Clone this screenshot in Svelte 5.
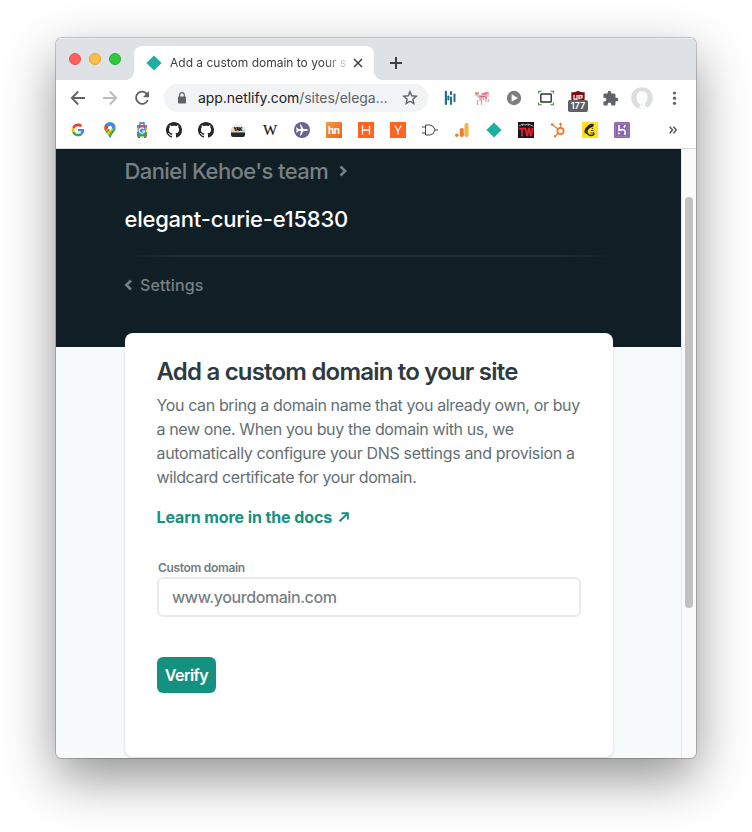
<script>
  const githubPath =
    'M8 0C3.58 0 0 3.58 0 8c0 3.54 2.29 6.53 5.47 7.59.4.07.55-.17.55-.38 0-.19-.01-.82-.01-1.49-2.01.37-2.53-.49-2.69-.94-.09-.23-.48-.94-.82-1.13-.28-.15-.68-.52-.01-.53.63-.01 1.08.58 1.23.82.72 1.21 1.87.87 2.33.66.07-.52.28-.87.51-1.07-1.78-.2-3.64-.89-3.64-3.95 0-.87.31-1.59.82-2.15-.08-.2-.36-1.02.08-2.12 0 0 .67-.21 2.2.82.64-.18 1.32-.27 2-.27s1.36.09 2 .27c1.53-1.04 2.2-.82 2.2-.82.44 1.1.16 1.92.08 2.12.51.56.82 1.27.82 2.15 0 3.07-1.87 3.75-3.65 3.95.29.25.54.73.54 1.48 0 1.07-.01 1.93-.01 2.2 0 .21.15.46.55.38A8.01 8.01 0 0 0 16 8c0-4.42-3.58-8-8-8z';
  let domain = $state('');
</script>

{#snippet diamond()}
  <svg width="16" height="16" viewBox="0 0 16 16"><path d="M8 .4 15.6 8 8 15.6.4 8z" fill="#1fafa0" /></svg>
{/snippet}

{#snippet github()}
  <svg width="16" height="16" viewBox="0 0 16 16"><path d={githubPath} fill="#24292e" /></svg>
{/snippet}

<div class="desktop">
  <div class="window">
    <header class="tabs">
      <div class="lights"><i class="red"></i><i class="amber"></i><i class="green"></i></div>
      <div class="tab">
        {@render diamond()}
        <span class="tab-title">Add a custom domain to your s</span>
        <svg class="close" width="10" height="10" viewBox="0 0 10 10"><path d="M1 1l8 8M9 1 1 9" stroke="#3c4043" stroke-width="1.5" /></svg>
      </div>
      <svg class="plus" width="14" height="14" viewBox="0 0 14 14"><path d="M7 1v12M1 7h12" stroke="#3c4043" stroke-width="2" /></svg>
    </header>

    <div class="toolbar">
      <div class="cell"><svg width="16" height="16" viewBox="0 0 16 16" fill="none" stroke="#5f6368" stroke-width="1.8"><path d="M15 8H2M8.2 1.5 1.8 8l6.4 6.5" /></svg></div>
      <div class="cell"><svg width="16" height="16" viewBox="0 0 16 16" fill="none" stroke="#b9bbbe" stroke-width="1.8"><path d="M1 8h13M7.8 1.5 14.2 8l-6.4 6.5" /></svg></div>
      <div class="cell"><svg width="16" height="16" viewBox="0 0 16 16"><path d="M13.2 4.3A6.1 6.1 0 1 0 13.8 10" fill="none" stroke="#5f6368" stroke-width="1.9" /><path d="M15 1v6.2H8.8z" fill="#5f6368" /></svg></div>
      <div class="address">
        <svg class="lock" width="10" height="12" viewBox="0 0 10 12"><rect x="1" y="4.4" width="8" height="7.2" rx=".8" fill="#5f6368" /><path d="M2.7 5V3a2.3 2.3 0 0 1 4.6 0v2" fill="none" stroke="#5f6368" stroke-width="1.2" /></svg>
        <span class="url">app.netlify.com<span>/sites/elega...</span></span>
        <svg class="star" width="16" height="16" viewBox="0 0 16 16"><path d="m8 1.7 1.75 4.1 4.5.4-3.4 2.95 1 4.35L8 11.2l-3.85 2.3 1-4.35-3.4-2.95 4.5-.4z" fill="none" stroke="#5f6368" stroke-width="1.4" /></svg>
      </div>
      <div class="cell"><svg width="16" height="16" viewBox="0 0 16 16" fill="#24708a"><rect x="2.800" y=".8" width="2.200" height="14.200" rx=".9" /><rect x="5.400" y="5.400" width="2" height="5.200" rx=".8" /><rect x="8" y="1" width="2" height="4.200" rx=".9" /><rect x="8" y="6.600" width="2" height="8.400" rx=".9" /><rect x="11.500" y="3.400" width="2" height="8.800" rx=".9" /></svg></div>
      <div class="cell"><svg width="16" height="16" viewBox="0 0 16 16" fill="none"><path d="M1 3.200h4M5 6.500h8M7.500 4.200 14.500 2.500" stroke="#e08894" stroke-width="2" /><path d="M4 3v5M3.500 10v5M6 5v6M7.500 7v8M9.500 5v5M12 3v9M14 2v5M14.300 9v3" stroke="#e59aa3" stroke-width="1.200" /><path d="M1.500 5h2M6.500 6.500h4M10 4h3M11 8h2" stroke="#d9627a" stroke-width="1" /></svg></div>
      <div class="cell"><svg width="16" height="16" viewBox="0 0 16 16"><circle cx="8" cy="8" r="7.2" fill="#7d7d7d" /><path d="M5.6 4.3v7.4L12 8z" fill="#fff" /></svg></div>
      <div class="cell"><svg width="16" height="16" viewBox="0 0 16 16" fill="none"><rect x="2.8" y="4" width="10.4" height="8" rx=".6" stroke="#302d38" stroke-width="1.4" /><path d="M.6 3.600V1.2h3M12.4 1.2h3v2.400M.6 12.400v2.4h3M12.4 14.8h3v-2.400" stroke="#3b8d25" stroke-width="1.1" /></svg></div>
      <div class="cell shield">
        <svg width="16" height="16" viewBox="0 0 16 16"><path d="M8 .7c2 1.3 4 1.6 6.7 1.6V8c0 4-4 6-6.7 7-3-1-6.7-3-6.7-7V2.3C4 2.3 6 2 8 .7z" fill="#800b12" /><path d="M4 5v4.2h3V5M9 9.500V5.600h3v2.400H9" fill="none" stroke="#fff" stroke-width="1.2" /></svg>
        <b>177</b>
      </div>
      <div class="cell"><svg width="17" height="17" viewBox="0 0 24 24"><path d="M20.5 11H19V7c0-1.1-.9-2-2-2h-4V3.5a2.5 2.5 0 0 0-5 0V5H4a2 2 0 0 0-2 2v3.8h1.5a2.7 2.7 0 0 1 0 5.4H2V20c0 1.100.9 2 2 2h3.800v-1.500a2.700 2.700 0 0 1 5.400 0V22H17a2 2 0 0 0 2-2v-4h1.500a2.500 2.500 0 0 0 0-5z" fill="#5f6368" /></svg></div>
      <div class="cell"><svg width="22" height="22" viewBox="0 0 22 22"><circle cx="11" cy="11" r="10.8" fill="#dcdddd" /><path d="M8.200 21.500 9 17.500C6.400 15.500 5.300 12.500 5.500 9.500 5.700 6 8 4.200 11 4.200c3.500 0 5.500 2.200 5.500 5.600 0 3-.8 5.400-2.500 7.200.2 2 1 2.800 2.500 3.300-2.300 1.400-5.300 1.900-8.300 1.200z" fill="#fafbfb" /><path d="M10.300 16.500l.2 3" stroke="#dcdddd" stroke-width=".6" /></svg></div>
      <div class="cell"><svg width="16" height="16" viewBox="0 0 16 16" fill="#5f6368"><circle cx="8.500" cy="3" r="1.600" /><circle cx="8.500" cy="8.200" r="1.600" /><circle cx="8.500" cy="13.300" r="1.600" /></svg></div>
    </div>

    <nav class="bookmarks">
      <svg width="16" height="16" viewBox="-6 -6 60 60"><path fill="#EA4335" d="M24 9.500c3.540 0 6.710 1.220 9.210 3.600l6.850-6.850C35.900 2.380 30.470 0 24 0 14.620 0 6.510 5.380 2.560 13.220l7.980 6.190C12.430 13.720 17.740 9.500 24 9.500z" /><path fill="#4285F4" d="M46.980 24.550c0-1.570-.15-3.090-.38-4.550H24v9.020h12.940c-.58 2.960-2.260 5.480-4.780 7.180l7.730 6c4.510-4.180 7.090-10.360 7.090-17.650z" /><path fill="#FBBC05" d="M10.530 28.590c-.48-1.450-.76-2.990-.76-4.590s.27-3.140.76-4.590l-7.980-6.190C.92 16.460 0 20.120 0 24c0 3.880.92 7.540 2.560 10.780l7.970-6.190z" /><path fill="#34A853" d="M24 48c6.480 0 11.930-2.130 15.890-5.810l-7.730-6c-2.150 1.450-4.920 2.300-8.160 2.300-6.260 0-11.570-4.220-13.470-9.910l-7.980 6.190C6.510 42.620 14.620 48 24 48z" /></svg>
      <svg width="16" height="16" viewBox="0 0 16 16"><defs><clipPath id="pin"><path d="M8 .2a5.600 5.600 0 0 0-5.600 5.600c0 3 1.700 4.300 3.200 6.200C6.900 13.700 7.200 15.800 8 15.800s1.100-2.100 2.400-3.800c1.500-1.900 3.200-3.200 3.200-6.200A5.600 5.600 0 0 0 8 .2z" /></clipPath></defs><g clip-path="url(#pin)"><path d="M0 0h16v16H0z" fill="#34a853" /><path d="M2 12 12 0H0v12z" fill="#fbbc04" /><path d="m4 12 9-10 0 3-7 9z" fill="#fbbc04" /><path d="M0 0h6L4 2.500 7 5 3 9 0 5z" fill="#ea4335" /><path d="M4.500 2 8 0h4l2 4-3.500 3z" fill="#4285f4" /><path d="M4 2.500 7 5.500 11.500 1 9 0H5z" fill="#4285f4" /></g><circle cx="8" cy="5.800" r="2" fill="#fff" /></svg>
      <svg width="16" height="16" viewBox="0 0 16 16"><path d="M6 3V1h4v2" fill="none" stroke="#2c71d3" stroke-width="1.300" /><path d="M3 3h10v4H3z" fill="#ea4335" /><path d="M3 10h10v4.500H3z" fill="#34a853" /><path d="M4 5.500h8v6H4z" fill="#4285f4" /><path d="M3 3h2v2.500H3zM11 3h2v2.500h-2z" fill="#4285f4" /><path d="M3 5.500h1.500v3H3zM11.500 5.500H13v3h-1.500z" fill="#fbbc04" /><path d="M3 12.500h1.500v2H3zM11.500 12.500H13v2h-1.500z" fill="#ea4335" /><path d="M4 14.500h2V16H4zM10 14.500h2V16h-2z" fill="#34714e" /><path d="M10 6.700A2.700 2.700 0 1 0 10.700 9H8" fill="none" stroke="#fff" stroke-width="1.200" /></svg>
      {@render github()}
      {@render github()}
      <svg width="16" height="16" viewBox="0 0 16 16"><defs><linearGradient id="cap" x2="0" y2="1"><stop stop-color="#f4f4f4" /><stop offset="1" stop-color="#c8c8c8" /></linearGradient></defs><path d="M3.500 2.500q4.500-1.500 9 0L15 7v5H1V7z" fill="url(#cap)" /><path d="M1 10.500h14V13Q15 15 13 15H3q-2 0-2-2z" fill="#28282a" /><text x="8" y="8.600" text-anchor="middle" font-size="4.500" font-weight="900" textLength="9">YAK</text></svg>
      <svg width="16" height="16" viewBox="0 0 16 16"><text x="8" y="12.800" text-anchor="middle" font-family="Liberation Serif,serif" font-size="15" fill="#111" stroke="#111" stroke-width=".15">W</text></svg>
      <svg width="16" height="16" viewBox="0 0 16 16"><circle cx="8" cy="8" r="8" fill="#666398" /><path d="M14 8q0-1-2-1H9.500L7 2.500H5.800L7 7H4.500L3 5.500H2L2.700 8 2 10.500h1L4.500 9H7l-1.200 4.500H7L9.500 9H12q2 0 2-1z" fill="#fff" /></svg>
      <svg width="16" height="16" viewBox="0 0 16 16"><defs><linearGradient id="hn" x2="1" y2="1"><stop stop-color="#f49a46" /><stop offset="1" stop-color="#e66512" /></linearGradient></defs><path d="M0 0h16v16H0z" fill="url(#hn)" /><text x="8" y="12.200" text-anchor="middle" font-size="10" font-weight="700" fill="#fff" textLength="12">hn</text></svg>
      <svg width="16" height="16" viewBox="0 0 16 16"><path d="M0 0h16v16H0z" fill="#ff6422" /><path d="M4.500 3.500v9M11.500 3.500v9M4.500 8h7" stroke="#fff" stroke-width="1.300" /></svg>
      <svg width="16" height="16" viewBox="0 0 16 16"><path d="M0 0h16v16H0z" fill="#ff6422" /><path d="M4.800 3.500 8 9l3.200-5.500M8 8.500v4.300" fill="none" stroke="#fff" stroke-width="1.200" /></svg>
      <svg width="16" height="16" viewBox="0 0 16 16"><path d="M3.500 3H8q4 .5 5 5-1 4.500-5 5H3.500zM0 5h3.500M0 11h3.500M13 8h3" fill="none" stroke="#444" stroke-width="1" /></svg>
      <svg width="16" height="16" viewBox="0 0 16 16"><rect x="10.500" y="1" width="4" height="14" rx="1.800" fill="#fbb040" /><rect x="5.800" y="6" width="4" height="9" rx="1.800" fill="#e8812c" /><circle cx="2.800" cy="13.200" r="1.800" fill="#e8812c" /></svg>
      {@render diamond()}
      <svg class="tw" width="16" height="16" viewBox="0 0 16 16"><path d="M0 0h16v16H0z" fill="#17191b" /><path d="m1 4 4-2 2 1 3-1 5 2M4 2l1 2M11 2l-1 2" stroke="#ccc" stroke-width=".8" fill="none" /><text x="8" y="14.300" text-anchor="middle" font-family="Liberation Sans,sans-serif" font-size="11" font-weight="700" fill="#ef2029" stroke="#ef2029" stroke-width=".4" textLength="14" lengthAdjust="spacingAndGlyphs">TW</text></svg>
      <svg width="16" height="16" viewBox="0 0 16 16" fill="none" stroke="#f1782a"><circle cx="10.500" cy="9" r="3.100" stroke-width="1.800" /><path d="M8 7 2.500 2.800M10.500 5.500V2.500M8.200 11.300 5.300 14" stroke-width="1.200" /><g fill="#f1782a" stroke="none"><circle cx="2.200" cy="2.600" r="1.400" /><circle cx="10.500" cy="2" r="1.300" /><circle cx="5" cy="14.200" r="1.200" /></g></svg>
      <svg width="16" height="16" viewBox="0 0 16 16"><path d="M0 0h16v16H0z" fill="#ffdf21" /><path d="M11.500 3.200C9.500 1.200 3.800 5 3 9.500c.2 1.300 1.200 1.800 2.200 1.500 1.300 3.200 5.300 3.400 7.300.3M5 10.500c-.7-4 2.500-6 6.500-7" fill="none" stroke="#252117" stroke-width="1.500" /><path d="M5.500 6.500 8 4.500l3-.8-.6 1.500-2.400.3-1.500 2z" fill="#252117" /><path d="M9 8.500h2.500M8.500 10.800q1.800.6 3.500-.4M9.800 6.500h1.400" fill="none" stroke="#252117" stroke-width=".8" /></svg>
      <svg width="16" height="16" viewBox="0 0 16 16"><rect width="16" height="16" rx="1.500" fill="#8b66ad" /><rect x="1.500" y="1.500" width="13" height="13" rx="1" fill="none" stroke="#a98bc2" stroke-width=".6" /><path d="M5 3v5.200Q11 6.600 11 9.300V13M11 3q0 1.500-1.200 2.600" fill="none" stroke="#fff" stroke-width="1.600" /><path d="m4.300 9.800 2 1.600-2 1.700z" fill="#fff" /></svg>
      <svg class="more" width="8" height="8" viewBox="0 0 8 8" fill="none" stroke="#505357" stroke-width="1.400"><path d="m.7.8 2.800 3.200L.7 7.200M4.500.8l2.800 3.200-2.800 3.200" /></svg>
    </nav>

    <main class="page">
      <div class="content">
        <section class="hero">
          <div class="team"><span>Daniel Kehoe's team</span><svg width="9" height="12" viewBox="0 0 9 12"><path d="m1.500 1.500 4.700 4.500-4.700 4.500" /></svg></div>
          <h1><span>elegant-curie-e15830</span></h1>
          <hr />
          <div class="back"><svg width="9" height="12" viewBox="0 0 9 12"><path d="M7 1.500 2.300 6 7 10.500" /></svg><span>Settings</span></div>
        </section>
        <section class="card">
          <h2><span>Add a custom domain to your site</span></h2>
          <p>You can bring a domain name that you already own, or buy<br />a new one. When you buy the domain with us, we<br /><span>automatically configure your DNS settings and provision a</span><br />wildcard certificate for your domain.</p>
          <div class="docs"><span>Learn more in the docs</span><svg width="12" height="12" viewBox="0 0 12 12"><path d="M1.500 10.300 9.500 2.800M3.500 2.200h6.400v6.200" fill="none" stroke="#15917f" stroke-width="1.900" /></svg></div>
          <label for="domain"><span>Custom domain</span></label>
          <input id="domain" placeholder="www.yourdomain.com" bind:value={domain} />
          <button><span>Verify</span></button>
        </section>
      </div>
      <div class="scrollbar"><div class="thumb"></div></div>
    </main>
  </div>
</div>

<style>
  :global(body) { margin: 0; background: #fff; }
  * { box-sizing: border-box; }
  svg { display: block; flex: none; }
  .desktop { width: 752px; height: 832px; padding: 38px 56px 74px; overflow: hidden; background: #fff; font-family: Inter, "Liberation Sans", sans-serif; }
  .window { width: 640px; height: 720px; display: flex; flex-direction: column; border-radius: 6px; overflow: hidden; background: #fff; box-shadow: 0 0 0 1px rgba(0,0,0,.2), 0 20px 52px rgba(0,0,0,.43); }
  .tabs { height: 42px; flex: none; display: flex; align-items: flex-end; background: #dee1e6; box-shadow: inset 0 1px #eceef0; }
  .lights { width: 78px; height: 42px; padding: 15px 0 0 13px; display: flex; gap: 8px; }
  .lights i { width: 12px; height: 12px; border-radius: 50%; border: 1px solid; }
  .lights .red { background: #ff605c; border-color: #e2534d; }
  .lights .amber { background: #ffbd44; border-color: #e0a33a; }
  .lights .green { background: #2fc840; border-color: #27aa35; }
  .tab { position: relative; width: 240px; height: 34px; padding-left: 12px; display: flex; align-items: center; background: #fff; border-radius: 8px 8px 0 0; }
  .tab::before, .tab::after { content: ''; position: absolute; bottom: 0; width: 8px; height: 8px; }
  .tab::before { left: -8px; background: radial-gradient(circle at 0 0, transparent 7.500px, #fff 8px); }
  .tab::after { right: -8px; background: radial-gradient(circle at 100% 0, transparent 7.500px, #fff 8px); }
  .tab-title { width: 176px; margin: -2px 0 0 8px; white-space: nowrap; font-size: 12px; letter-spacing: 0; color: #3c4043; -webkit-mask-image: linear-gradient(90deg, #000 153px, transparent 182px); mask-image: linear-gradient(90deg, #000 153px, transparent 182px); }
  .close { margin-left: 7px; }
  .plus { margin: 0 0 10px 15px; }
  .toolbar { height: 36px; flex: none; display: flex; align-items: center; padding-left: 6px; }
  .cell { width: 32px; height: 32px; flex: none; display: flex; align-items: center; justify-content: center; }
  .address { width: 264px; height: 28px; margin: 0 6px; flex: none; border-radius: 14px; background: #f1f3f4; display: flex; align-items: center; }
  .lock { margin-left: 13px; }
  .url { width: 196px; margin: -1px 0 0 11px; font-size: 14px; letter-spacing: -.05px; color: #202124; white-space: nowrap; }
  .url span { color: #5f6368; }
  .star { margin-left: 8px; }
  .shield { position: relative; }
  .shield b { position: absolute; left: 6px; top: 18px; width: 20px; height: 12px; border-radius: 2px; background: #5e6063; color: #fff; font-size: 9px; line-height: 12px; font-weight: 600; text-align: center; }
  .bookmarks { height: 33px; flex: none; display: flex; align-items: flex-start; gap: 16px; padding: 6px 0 0 14px; border-bottom: 1px solid #d9dbde; }
  .bookmarks .tw { overflow: visible; }
  .bookmarks .more { margin: 4px 0 0 23px; }
  .page { height: 609px; display: flex; }
  .content { width: 625px; height: 609px; background: linear-gradient(#101e25 198px, #f6fafb 198px); padding: 0 68px 0 69px; }
  .hero { height: 184px; display: flex; flex-direction: column; color: #778186; }
  .team { height: 28px; margin: 8px 0 0 -.5px; display: flex; align-items: center; gap: 11px; font-size: 22px; font-weight: 500; letter-spacing: -.58px; white-space: nowrap; color: #788084; }
  .hero path { fill: none; stroke: #788084; stroke-width: 2.500; }
  h1 { margin: 20px 0 0 -.5px; height: 28px; line-height: 28px; font-size: 22px; font-weight: 500; letter-spacing: -.23px; color: #fff; white-space: nowrap; }
  hr { width: 100%; height: 2px; margin: 22px 0 0; border: 0; background: linear-gradient(90deg, transparent, #222f36 12%, #222f36 88%, transparent); }
  .back { height: 24px; margin: 16px 0 0 -1px; display: flex; align-items: center; gap: 7px; font-size: 16px; font-weight: 500; letter-spacing: .15px; }
  .card { width: 488px; height: 424px; padding: 24px 32px; background: #fff; border-radius: 8px; box-shadow: 0 1px 3px rgba(14,30,37,.16); color: #2d3b41; }
  h2 { margin: 0 0 0 -.5px; height: 30px; line-height: 30px; font-size: 24px; font-weight: 600; letter-spacing: -.8px; white-space: nowrap; color: #2d3b41; }
  p { margin: 6px 0 0 -.5px; font-size: 16px; line-height: 24px; letter-spacing: -.38px; color: #646f74; white-space: nowrap; }
  p span { letter-spacing: -.34px; }
  .docs { height: 24px; margin: 16px 0 0 -.5px; display: flex; align-items: center; gap: 6px; font-size: 16px; font-weight: 700; letter-spacing: -.1px; color: #15917f; }
  label { display: block; height: 18px; line-height: 18px; margin: 30px 0 0 1px; font-size: 12px; font-weight: 600; letter-spacing: -.32px; color: #747d81; }
  input { display: block; width: 424px; height: 40px; padding: 0 13px; border: 2px solid #e9ebeb; border-radius: 6px; background: #fff; font: 500 16px Inter, sans-serif; letter-spacing: -.42px; color: #2d3b41; }
  input::placeholder { color: #778186; opacity: 1; }
  button { display: flex; align-items: center; justify-content: center; width: 59px; height: 36px; margin-top: 40px; padding: 0; border: 0; border-radius: 6px; background: #15917f; color: #fff; font: 600 16px Inter, sans-serif; letter-spacing: -.5px; }
  .scrollbar { width: 15px; height: 609px; padding: 48px 0 0 3px; background: #fafafa; border-left: 1px solid #e8e8e8; }
  .thumb { width: 8px; height: 411px; border-radius: 4px; background: #c1c1c1; }
</style>
